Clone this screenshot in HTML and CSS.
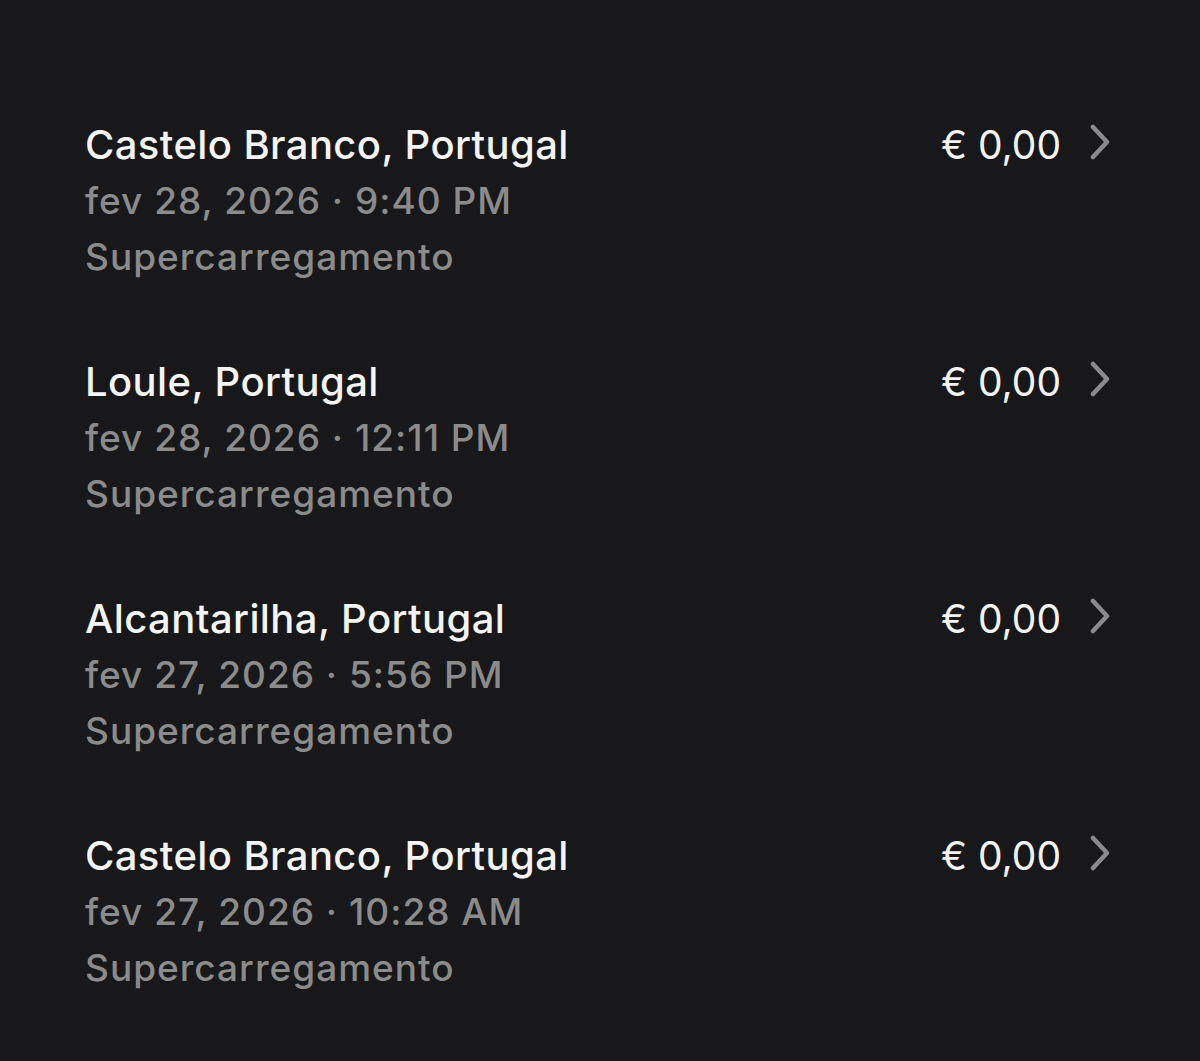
FILE: index.html
```html
<!DOCTYPE html>
<html>
    <head>
        <title>Supercarregamento</title>
        <link rel="stylesheet" href="styles.css">
    </head>
    <body>
        <div id="History">
            <div class="Charge">
                <div class="ChargeInfo">
                    <div class="ChargePlace">Castelo Branco, Portugal</div>
                    <div class="ChargeMeta">fev 28, 2026 · 9:40 PM</div>
                    <div class="ChargeMeta">Supercarregamento</div>
                </div>
                <div class="ChargePrice">€ 0,00</div>
                <svg class="Chevron" width="24" height="36" viewBox="0 0 24 36"><path d="M5 3 L19 18 L5 33" /></svg>
            </div>
            <div class="Charge">
                <div class="ChargeInfo">
                    <div class="ChargePlace">Loule, Portugal</div>
                    <div class="ChargeMeta">fev 28, 2026 · 12:11 PM</div>
                    <div class="ChargeMeta">Supercarregamento</div>
                </div>
                <div class="ChargePrice">€ 0,00</div>
                <svg class="Chevron" width="24" height="36" viewBox="0 0 24 36"><path d="M5 3 L19 18 L5 33" /></svg>
            </div>
            <div class="Charge">
                <div class="ChargeInfo">
                    <div class="ChargePlace">Alcantarilha, Portugal</div>
                    <div class="ChargeMeta">fev 27, 2026 · 5:56 PM</div>
                    <div class="ChargeMeta">Supercarregamento</div>
                </div>
                <div class="ChargePrice">€ 0,00</div>
                <svg class="Chevron" width="24" height="36" viewBox="0 0 24 36"><path d="M5 3 L19 18 L5 33" /></svg>
            </div>
            <div class="Charge">
                <div class="ChargeInfo">
                    <div class="ChargePlace">Castelo Branco, Portugal</div>
                    <div class="ChargeMeta">fev 27, 2026 · 10:28 AM</div>
                    <div class="ChargeMeta">Supercarregamento</div>
                </div>
                <div class="ChargePrice">€ 0,00</div>
                <svg class="Chevron" width="24" height="36" viewBox="0 0 24 36"><path d="M5 3 L19 18 L5 33" /></svg>
            </div>
        </div>
    </body>
</html>
```

FILE: styles.css
```css
body{
    margin: 0;
    height: 100vh;
    background-color: #18181a;
    font-family: Inter, 'Noto Sans', sans-serif;
}

#History{
    padding: 117px 88px 0 85px;
    display: flex;
    flex-direction: column;
    gap: 69px;
}

.Charge{
    display: flex;
    align-items: flex-start;
}

.ChargeInfo{
    flex: 1;
    display: flex;
    flex-direction: column;
}

.ChargePlace{
    color: #f4f4f4;
    font-size: 40px;
    font-weight: 500;
    line-height: 56px;
    letter-spacing: 0.4px;
}

.ChargeMeta{
    color: #8b8b8b;
    font-size: 37px;
    font-weight: 500;
    line-height: 56px;
    letter-spacing: 1px;
}

.ChargePrice{
    color: #f4f4f4;
    font-size: 39px;
    font-weight: 400;
    line-height: 56px;
}

.Chevron{
    margin-left: 27px;
    margin-top: 7px;
}

.Chevron path{
    fill: none;
    stroke: #8a8a8a;
    stroke-width: 4.5;
    stroke-linecap: round;
    stroke-linejoin: round;
}
```
